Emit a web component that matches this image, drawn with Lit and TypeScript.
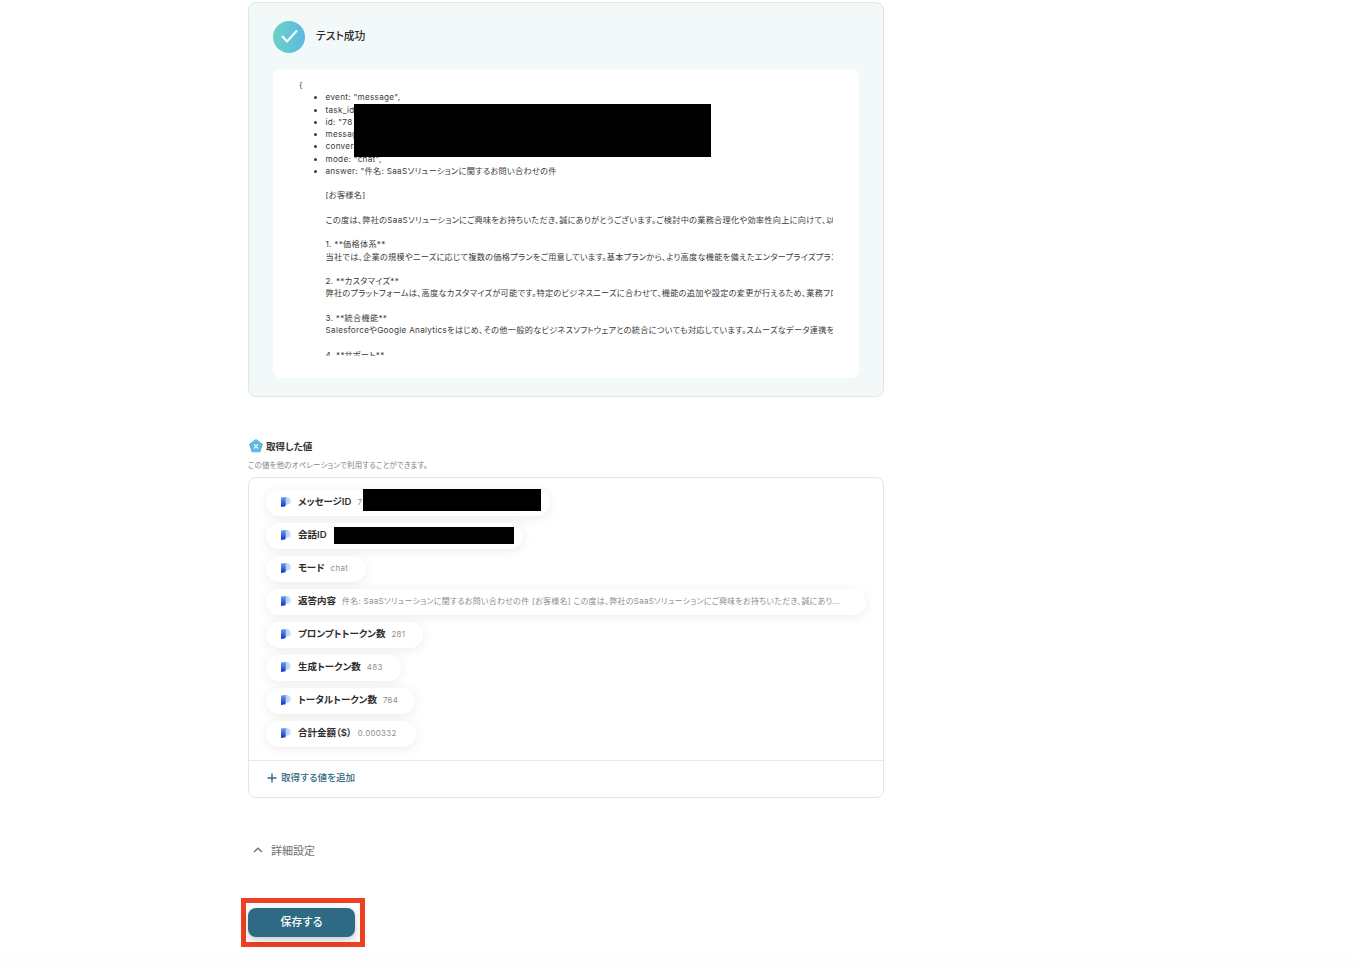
import { LitElement, html, css, svg } from "lit";
import { customElement } from "lit/decorators.js";

const pills: { k: string; v: string; w: number; cover?: number[] }[] = [
  { k: "メッセージID", v: "7", w: 284, cover: [97, 178, -1, 22] },
  { k: "会話ID", v: "", w: 257, cover: [68, 180, 4, 17] },
  { k: "モード", v: "chat", w: 100 },
  {
    k: "返答内容",
    v: "件名: SaaSソリューションに関するお問い合わせの件 [お客様名] この度は、弊社のSaaSソリューションにご興味をお持ちいただき、誠にあり...",
    w: 600,
  },
  { k: "プロンプトトークン数", v: "281", w: 157 },
  { k: "生成トークン数", v: "483", w: 135 },
  { k: "トータルトークン数", v: "764", w: 149 },
  { k: "合計金額（$）", v: "0.000332", w: 150 },
];

const answer = `answer: "件名: SaaSソリューションに関するお問い合わせの件

[お客様名]

この度は、弊社のSaaSソリューションにご興味をお持ちいただき、誠にありがとうございます。ご検討中の業務合理化や効率性向上に向けて、以下の点についてご案内いたします。

1. **価格体系**
当社では、企業の規模やニーズに応じて複数の価格プランをご用意しています。基本プランから、より高度な機能を備えたエンタープライズプランまで

2. **カスタマイズ**
弊社のプラットフォームは、高度なカスタマイズが可能です。特定のビジネスニーズに合わせて、機能の追加や設定の変更が行えるため、業務フローに

3. **統合機能**
SalesforceやGoogle Analyticsをはじめ、その他一般的なビジネスソフトウェアとの統合についても対応しています。スムーズなデータ連携を実現

4. **サポート**`;

const pillIcon = svg`<svg class="pi" viewBox="0 0 10 10" width="10" height="10">
  <defs>
    <linearGradient id="pa" x1="0" y1="0" x2="0" y2="1"><stop offset="0" stop-color="#6f9cf2"/><stop offset="1" stop-color="#1230c8"/></linearGradient>
    <linearGradient id="pb" x1="0" y1="0" x2="1" y2="0"><stop offset="0" stop-color="#a9c8f7"/><stop offset="1" stop-color="#d7e6fb"/></linearGradient>
  </defs>
  <path d="M4 0H5.5C8 0 10 1.8 10 4.2C10 6 8.8 7.2 7 7.6L4 8Z" fill="url(#pb)"/>
  <path d="M0 .6L4.6 0V9.3L0 10Z" fill="url(#pa)"/>
</svg>`;

@customElement("app-root")
export class AppRoot extends LitElement {
  static styles = css`
    :host {
      display: block;
      height: 966px;
      overflow: hidden;
      background: linear-gradient(#fff 948px, #fcfcfc 966px);
      font-family: Inter, "Noto Sans CJK JP", "Noto Sans", sans-serif;
      font-feature-settings: "palt";
      color: #2a2a2a;
    }
    .col {
      width: 636px;
      margin-left: 248px;
      padding-top: 2px;
      display: flex;
      flex-direction: column;
      align-items: stretch;
    }
    .result {
      box-sizing: border-box;
      height: 395px;
      background: #f3f8f8;
      border: 1px solid #e3e6e7;
      border-radius: 8px;
      padding: 18px 24px;
      display: flex;
      flex-direction: column;
    }
    .rhead {
      display: flex;
      align-items: center;
      gap: 11px;
      height: 32px;
      margin-bottom: 16px;
      font-size: 10.8px;
      font-weight: 500;
      color: #2b2b2b;
    }
    .rhead span { margin-bottom: 4px; }
    .check { display: block; }
    .out {
      position: relative;
      background: #fff;
      border-radius: 8px;
      height: 309px;
      box-sizing: border-box;
      padding: 10px 26px 0;
    }
    .scroll {
      height: 276.5px;
      overflow: hidden;
      font-size: 8.17px;
      line-height: 12.25px;
      letter-spacing: 0.29px;
      color: #3a3a3a;
      white-space: nowrap;
    }
    .scroll ul { margin: 0; padding: 0 0 0 26.5px; }
    .scroll li::marker { font-size: 8px; }
    .ans { white-space: pre; }
    .redact { position: absolute; background: #000; }
    .r1 { left: 81px; top: 35px; width: 357px; height: 53px; }
    .vtitle {
      display: flex;
      align-items: center;
      gap: 3px;
      margin-top: 41px;
      height: 16px;
      font-size: 9.6px;
      font-weight: 600;
      color: #333;
      padding-left: 1px;
    }
    .vsub {
      margin-top: 6px;
      height: 12px;
      line-height: 12px;
      font-size: 7.45px;
      letter-spacing: 0.18px;
      color: #808688;
    }
    .vbox {
      margin-top: 5px;
      box-sizing: border-box;
      height: 321px;
      border: 1px solid #e3e6e7;
      border-radius: 8px;
      display: flex;
      flex-direction: column;
    }
    .plist {
      box-sizing: border-box;
      flex: none;
      height: 283px;
      padding: 12px 17px 0;
      display: flex;
      flex-direction: column;
      gap: 7px;
      align-items: flex-start;
      border-bottom: 1px solid #e6e8e9;
    }
    .pill {
      position: relative;
      box-sizing: border-box;
      height: 26px;
      border-radius: 13px;
      background: #fff;
      box-shadow: 0 2px 12px rgba(0, 0, 0, 0.08);
      display: flex;
      align-items: center;
      padding-left: 15px;
      padding-bottom: 4px;
      white-space: nowrap;
    }
    .pi { flex: none; margin-right: 7px; margin-top: 2px; }
    .k {
      font-size: 9.5px;
      font-weight: 600;
      color: #2d2d2d;
      margin-right: 6px;
    }
    .v {
      font-size: 7.95px;
      letter-spacing: 0.3px;
      color: #8b8f91;
      margin-top: 1px;
    }
    .pr { position: absolute; background: #000; }
    .add {
      flex: 1;
      display: flex;
      align-items: center;
      padding: 0 0 5px 18px;
      gap: 4px;
      font-size: 9.6px;
      font-weight: 500;
      color: #2f6a84;
    }
    .add svg { margin-top: 2px; }
    .adv {
      display: flex;
      align-items: center;
      margin-top: 42px;
      height: 20px;
      padding-left: 5px;
      gap: 8px;
      font-size: 11px;
      color: #6d7173;
    }
    .mark {
      align-self: flex-start;
      margin-top: 38px;
      margin-left: -7px;
      box-sizing: border-box;
      width: 124px;
      height: 49px;
      border: 5px solid #ee4023;
      padding: 5px 0 0 2px;
    }
    .save {
      display: flex;
      align-items: center;
      justify-content: center;
      box-sizing: border-box;
      width: 107px;
      height: 29px;
      padding-bottom: 4px;
      border-radius: 8px;
      background: #2f6a84;
      color: #fff;
      font-size: 10.8px;
      font-weight: 500;
      letter-spacing: 0.3px;
      box-shadow: 0 3px 8px rgba(0, 0, 0, 0.22);
    }
  `;

  render() {
    return html`<div class="col">
      <section class="result">
        <div class="rhead">
          <svg class="check" width="32" height="32" viewBox="0 0 32 32">
            <defs>
              <linearGradient id="cg" x1="0" y1="0" x2="1" y2="0">
                <stop offset="0" stop-color="#6bd2c4" /><stop offset="1" stop-color="#5bb9e2" />
              </linearGradient>
            </defs>
            <circle cx="16" cy="16" r="16" fill="url(#cg)" />
            <path d="M9.5 15.5L14 20.5L23.5 10" fill="none" stroke="#fff" stroke-width="2" stroke-linecap="round" stroke-linejoin="round" />
          </svg>
          <span>テスト成功</span>
        </div>
        <div class="out">
          <div class="scroll">
            <div>{</div>
            <ul>
              <li>event: "message",</li>
              <li>task_id</li>
              <li>id: "78</li>
              <li>message</li>
              <li>conver</li>
              <li>mode: "chat",</li>
              <li class="ans">${answer}</li>
            </ul>
          </div>
          <div class="redact r1"></div>
        </div>
      </section>

      <div class="vtitle">
        <svg width="14" height="14" viewBox="0 0 14 14">
          <path d="M7 .6L13.4 5.2L11 12.8H3L.6 5.2Z" fill="#5bb9e2" stroke="#5bb9e2" stroke-width="1" stroke-linejoin="round" />
          <path d="M5.3 5.6L8.7 9M8.7 5.6L5.3 9" stroke="#fff" stroke-width="1.2" stroke-linecap="round" />
        </svg>
        取得した値
      </div>
      <div class="vsub">この値を他のオペレーションで利用することができます。</div>

      <div class="vbox">
        <div class="plist">
          ${pills.map(
            (p) => html`<div class="pill" style="width:${p.w}px">
              ${pillIcon}<span class="k">${p.k}</span><span class="v">${p.v}</span>
              ${p.cover
                ? html`<i class="pr" style="left:${p.cover[0]}px;width:${p.cover[1]}px;top:${p.cover[2]}px;height:${p.cover[3]}px"></i>`
                : ""}
            </div>`
          )}
        </div>
        <div class="add">
          <svg width="10" height="10" viewBox="0 0 10 10">
            <path d="M5 .5V9.5M.5 5H9.5" stroke="#2f6a84" stroke-width="1.4" />
          </svg>
          取得する値を追加
        </div>
      </div>

      <div class="adv">
        <svg width="10" height="6" viewBox="0 0 10 6">
          <path d="M1 5L5 1.2L9 5" fill="none" stroke="#6d7173" stroke-width="1.3" />
        </svg>
        詳細設定
      </div>

      <div class="mark"><div class="save">保存する</div></div>
    </div>`;
  }
}
